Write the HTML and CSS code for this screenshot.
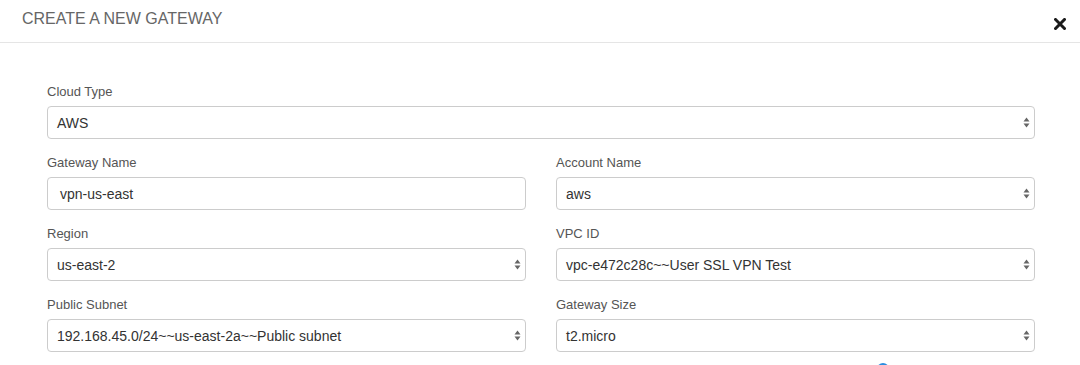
FILE: index.html
```html
<!DOCTYPE html>
<html>
<head>
<meta charset="utf-8">
<link rel="stylesheet" href="styles.css">
</head>
<body>
<div class="modal">
  <div class="modal-header">
    <h4 class="modal-title">CREATE A NEW GATEWAY</h4>
    <button class="close" aria-label="Close">
      <svg width="12" height="12" viewBox="0 0 12 12"><path d="M1.5 1.5 L10.5 10.5 M10.5 1.5 L1.5 10.5" stroke="#1a1a1a" stroke-width="3" stroke-linecap="square"/></svg>
    </button>
  </div>
  <div class="modal-body">
    <div class="form-group full">
      <label class="label">Cloud Type</label>
      <div class="control select"><span>AWS</span><svg class="arrows" width="7" height="11" viewBox="0 0 7 11"><path d="M3.5 0.5 L6.5 4.5 L0.5 4.5 Z M3.5 10.5 L6.5 6.5 L0.5 6.5 Z" fill="#666"/></svg></div>
    </div>
    <div class="form-grid">
      <div class="form-group">
        <label class="label">Gateway Name</label>
        <div class="control input"><span>vpn-us-east</span></div>
      </div>
      <div class="form-group">
        <label class="label">Account Name</label>
        <div class="control select"><span>aws</span><svg class="arrows" width="7" height="11" viewBox="0 0 7 11"><path d="M3.5 0.5 L6.5 4.5 L0.5 4.5 Z M3.5 10.5 L6.5 6.5 L0.5 6.5 Z" fill="#666"/></svg></div>
      </div>
      <div class="form-group">
        <label class="label">Region</label>
        <div class="control select"><span>us-east-2</span><svg class="arrows" width="7" height="11" viewBox="0 0 7 11"><path d="M3.5 0.5 L6.5 4.5 L0.5 4.5 Z M3.5 10.5 L6.5 6.5 L0.5 6.5 Z" fill="#666"/></svg></div>
      </div>
      <div class="form-group">
        <label class="label">VPC ID</label>
        <div class="control select"><span>vpc-e472c28c~~User SSL VPN Test</span><svg class="arrows" width="7" height="11" viewBox="0 0 7 11"><path d="M3.5 0.5 L6.5 4.5 L0.5 4.5 Z M3.5 10.5 L6.5 6.5 L0.5 6.5 Z" fill="#666"/></svg></div>
      </div>
      <div class="form-group">
        <label class="label">Public Subnet</label>
        <div class="control select"><span>192.168.45.0/24~~us-east-2a~~Public subnet</span><svg class="arrows" width="7" height="11" viewBox="0 0 7 11"><path d="M3.5 0.5 L6.5 4.5 L0.5 4.5 Z M3.5 10.5 L6.5 6.5 L0.5 6.5 Z" fill="#666"/></svg></div>
      </div>
      <div class="form-group">
        <label class="label">Gateway Size</label>
        <div class="control select"><span>t2.micro</span><svg class="arrows" width="7" height="11" viewBox="0 0 7 11"><path d="M3.5 0.5 L6.5 4.5 L0.5 4.5 Z M3.5 10.5 L6.5 6.5 L0.5 6.5 Z" fill="#666"/></svg></div>
      </div>
    </div>
    <div class="next-row">
      <span class="help-dot"></span>
    </div>
  </div>
</div>
</body>
</html>
```
FILE: styles.css
```css
* { box-sizing: border-box; }
html, body {
  margin: 0;
  padding: 0;
  background: #fff;
  height: 365px;
  overflow: hidden;
}
body {
  font-family: "Liberation Sans", Arial, Helvetica, sans-serif;
  color: #333;
}
.modal {
  width: 1080px;
}
.modal-header {
  height: 43px;
  border-bottom: 1px solid #e5e5e5;
  display: flex;
  align-items: center;
  justify-content: space-between;
  padding: 0 14px 0 22px;
}
.modal-title {
  margin: 0;
  font-size: 16px;
  font-weight: normal;
  color: #666;
  line-height: 18px;
  margin-top: -4px;
}
.close {
  border: 0;
  background: none;
  padding: 0;
  margin-top: 5px;
  width: 12px;
  height: 12px;
  display: flex;
}
.modal-body {
  padding: 40px 45px 0 47px;
}
.form-grid {
  display: grid;
  grid-template-columns: 1fr 1fr;
  column-gap: 30px;
}
.form-group {
  margin-bottom: 15px;
}
.label {
  display: block;
  font-size: 13px;
  line-height: 18px;
  color: #555;
  margin-bottom: 5px;
}
.control {
  height: 33px;
  border: 1px solid #ccc;
  border-radius: 4px;
  display: flex;
  align-items: center;
  font-size: 14px;
  color: #333;
  background: #fff;
}
.input {
  padding: 0 12px;
}
.select {
  padding: 0 4px 0 9px;
  justify-content: space-between;
}
.arrows {
  flex: none;
}
.next-row {
  margin-top: -4px;
  padding-left: 830px;
}
.help-dot {
  display: block;
  width: 12px;
  height: 12px;
  border-radius: 50%;
  background: #2a8de0;
}
```
